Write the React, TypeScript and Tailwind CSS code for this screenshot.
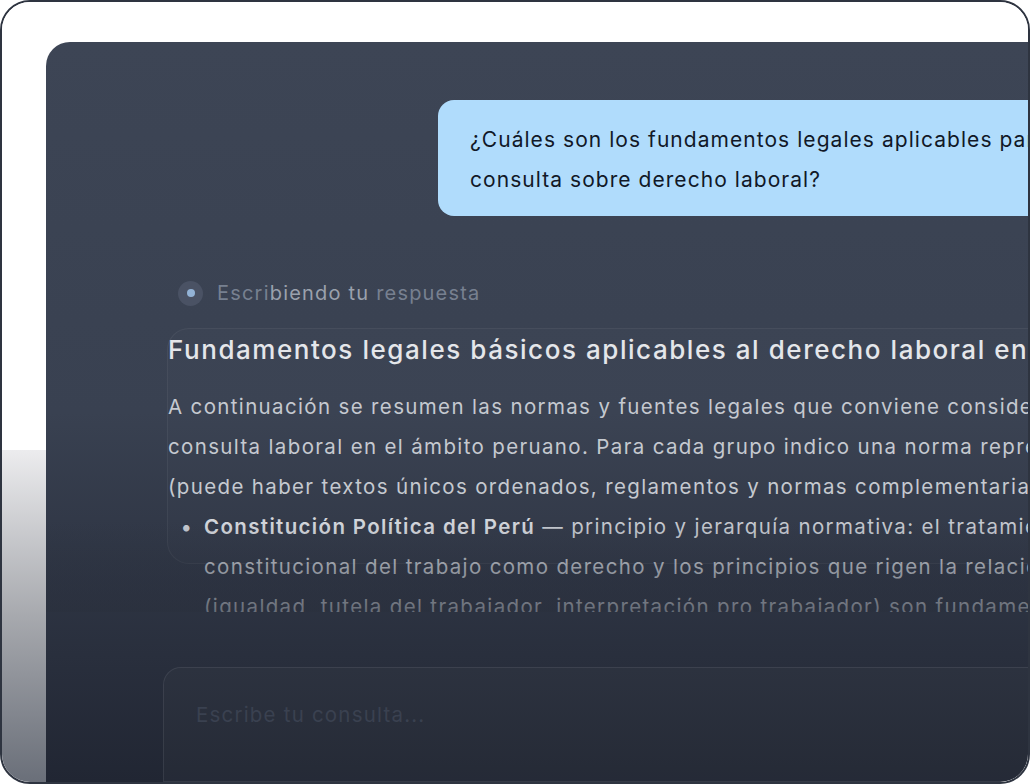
import React from 'react';

const font = { fontFamily: 'Inter, "Noto Sans", sans-serif' };

const TypingIndicator: React.FC = () => (
  <div className="flex items-center gap-[14px] ml-[132px]">
    <div className="w-[25px] h-[25px] rounded-full bg-[#4a5264] flex items-center justify-center">
      <div className="w-[8px] h-[8px] rounded-full bg-[#93b3d6]"></div>
    </div>
    <span className="text-[20px] leading-[28px] tracking-[1.2px] text-[#778090]">
      Escri<span className="text-[#9aa1ad]">biendo tu</span> respuesta
    </span>
  </div>
);

const App: React.FC = () => {
  return (
    <div className="w-[1030px] h-[784px] bg-white" style={font}>
      <div className="w-full h-full rounded-[30px] border-2 border-[#2e3440] overflow-hidden flex bg-white">
        {/* Left fog strip */}
        <div className="w-[44px] flex flex-col shrink-0">
          <div className="h-[448px] bg-white"></div>
          <div className="flex-1 bg-gradient-to-b from-[#ececee] via-[#a7a9ae] to-[#6a6f79]"></div>
        </div>

        {/* Chat panel */}
        <div className="flex-1 flex flex-col pt-[40px] bg-white min-w-0">
          <div className="flex-1 flex flex-col rounded-tl-[24px] bg-gradient-to-b from-[#3d4555] via-[#394151] to-[#212633] overflow-hidden min-w-0">
            {/* Messages */}
            <div className="h-[570px] flex flex-col pt-[58px] overflow-hidden relative">
              <div className="ml-[392px] w-[700px] shrink-0 rounded-[16px] bg-[#b0dcfc] pl-[32px] pt-[20px] pb-[16px]">
                <p className="text-[21px] leading-[40px] tracking-[1.05px] text-[#111827] whitespace-nowrap">
                  ¿Cuáles son los fundamentos legales aplicables para una
                  <br />
                  consulta sobre derecho laboral?
                </p>
              </div>

              <div className="mt-[63px]">
                <TypingIndicator />
              </div>

              <div className="relative ml-[122px] mt-[17px] pt-[8px] w-[900px]">
                <div className="absolute left-[-1px] top-[4px] w-[1000px] h-[236px] rounded-[22px] border border-white/[0.05] bg-white/[0.01]"></div>
                <h2 className="text-[26px] leading-[36px] font-medium text-[#e4e6ea] whitespace-nowrap tracking-[1.55px]">
                  Fundamentos legales básicos aplicables al derecho laboral en el Perú
                </h2>
                <p className="mt-[19px] text-[20.5px] leading-[40px] tracking-[1.35px] text-[#c5c9d0] whitespace-nowrap">
                  A continuación se resumen las normas y fuentes legales que conviene considerar en una
                  <br />
                  consulta laboral en el ámbito peruano. Para cada grupo indico una norma representativa
                  <br />
                  (puede haber textos únicos ordenados, reglamentos y normas complementarias).
                </p>
                <div className="flex text-[20.5px] leading-[40px] tracking-[1.35px] text-[#c5c9d0] whitespace-nowrap">
                  <span className="w-[36px] shrink-0 text-center pl-[2px]">•</span>
                  <p>
                    <span className="font-semibold text-[#d2d5db]">Constitución Política del Perú</span> — principio y jerarquía normativa: el tratamiento
                    <br />
                    constitucional del trabajo como derecho y los principios que rigen la relación laboral
                    <br />
                    (igualdad, tutela del trabajador, interpretación pro trabajador) son fundamentales.
                  </p>
                </div>
              </div>
              <div className="absolute left-0 right-0 bottom-0 h-[90px] bg-gradient-to-b from-transparent to-[#2a303d]/60"></div>
            </div>

            {/* Input */}
            <div className="flex-1 pt-[55px] pl-[117px]">
              <div className="h-full w-[1000px] rounded-t-[18px] border border-white/[0.08] bg-white/[0.02] pl-[32px] pt-[32px]">
                <span className="text-[20.5px] tracking-[1.2px] text-[#3a4150]">Escribe tu consulta...</span>
              </div>
            </div>
          </div>
        </div>
      </div>
    </div>
  );
};

export default App;
